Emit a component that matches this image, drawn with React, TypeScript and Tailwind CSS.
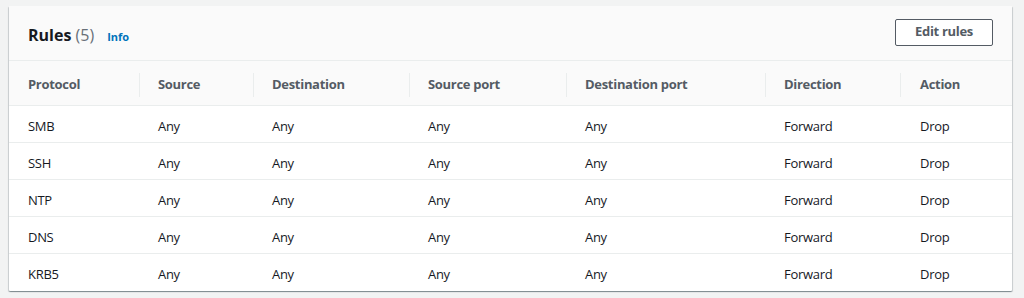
const columns = [
  { label: 'Protocol', w: 'w-[130px]', pl: 'pl-[19px]' },
  { label: 'Source', w: 'w-[114px]', pl: 'pl-[18px]' },
  { label: 'Destination', w: 'w-[156px]', pl: 'pl-[18px]' },
  { label: 'Source port', w: 'w-[157px]', pl: 'pl-[18px]' },
  { label: 'Destination port', w: 'w-[199px]', pl: 'pl-[18px]' },
  { label: 'Direction', w: 'w-[135px]', pl: 'pl-[18px]' },
  { label: 'Action', w: 'w-[112px]', pl: 'pl-[19px]' },
];

const rules = ['SMB', 'SSH', 'NTP', 'DNS', 'KRB5'].map((p) => [
  p,
  'Any',
  'Any',
  'Any',
  'Any',
  'Forward',
  'Drop',
]);

export default function App() {
  return (
    <div className="h-[298px] w-[1024px] bg-[#f2f3f3] pl-[9px] pt-[6px] font-['Open_Sans',sans-serif] text-[13px] tracking-[-0.3px]">
      <div className="w-[1003px] overflow-hidden rounded-[1px] bg-white shadow-[0_1px_1px_0_rgba(0,28,36,0.3),1px_1px_1px_0_rgba(0,28,36,0.15),-1px_1px_1px_0_rgba(0,28,36,0.15)]">
        <div className="flex h-[55px] items-center justify-between border-b border-[#eaeded] bg-[#fafafa] pl-[19px] pr-[19px]">
          <div className="mt-[4px] flex items-baseline">
            <h2 className="text-[16px] font-bold tracking-normal text-[#16191f]">
              Rules <span className="font-normal text-[#687078]">(5)</span>
            </h2>
            <a className="ml-[13px] text-[11px] font-bold tracking-normal text-[#0073bb]">Info</a>
          </div>
          <button
            type="button"
            className="mt-[-2px] h-[27px] w-[98px] rounded-[2px] border border-[#545b64] bg-white text-[13px] font-bold text-[#545b64]"
          >
            Edit rules
          </button>
        </div>
        <div className="flex h-[45px] items-center border-b border-[#eaeded] bg-[#fafafa] pt-[4px]">
          {columns.map((c, i) => (
            <div
              key={c.label}
              className={`${c.w} ${c.pl} flex h-[24px] items-center font-bold text-[#545b64] ${
                i > 0 ? 'border-l border-[#eaeded]' : ''
              }`}
            >
              {c.label}
            </div>
          ))}
        </div>
        {rules.map((row, r) => (
          <div
            key={row[0]}
            className={`flex h-[37px] items-center pt-[5px] text-[#16191f] ${
              r < rules.length - 1 ? 'border-b border-[#eaeded]' : ''
            }`}
          >
            {row.map((cell, i) => (
              <div key={i} className={`${columns[i].w} ${columns[i].pl} ${i > 0 ? 'border-l border-transparent' : ''}`}>
                {cell}
              </div>
            ))}
          </div>
        ))}
      </div>
    </div>
  );
}
